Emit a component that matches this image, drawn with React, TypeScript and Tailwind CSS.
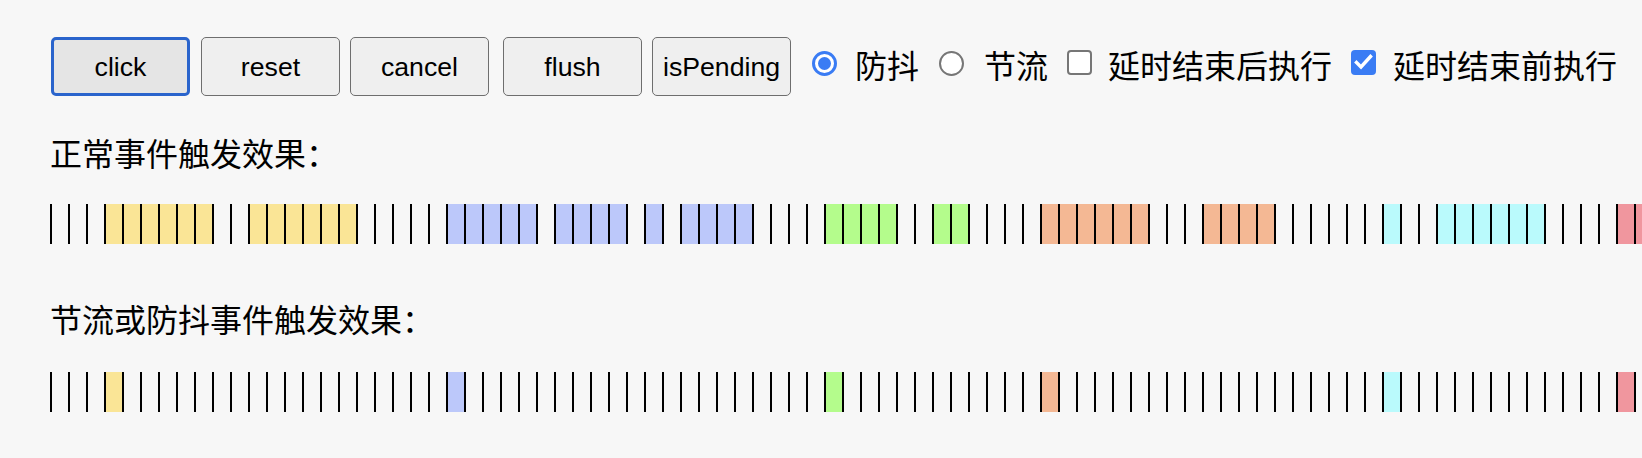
import React from "react";

const CJK = "font-['Noto_Sans_CJK_SC',sans-serif]";

// one letter per cell: . = idle, Y/B/G/O/C/P = burst colour
const NORMAL_ROW =
  "...YYYYYY..YYYYYY.....BBBBB.BBBB.B.BBBB....GGGG..GG....OOOOOO...OOOO......C..CCCCCC....PP.";
const LIMITED_HITS: Record<number, string> = { 3: "Y", 22: "B", 43: "G", 55: "O", 74: "C", 87: "P" };
const LIMITED_ROW = Array.from({ length: NORMAL_ROW.length }, (_, i) => LIMITED_HITS[i] ?? ".").join("");

const CELL_BG: Record<string, string> = {
  ".": "bg-transparent",
  Y: "bg-[#fae596]",
  B: "bg-[#bcc8fa]",
  G: "bg-[#b4fc8c]",
  O: "bg-[#f4b894]",
  C: "bg-[#bafafc]",
  P: "bg-[#f0969e]",
};

function Timeline({ cells }: { cells: string }) {
  return (
    <div className="flex h-[40px] pl-[50px]">
      {cells.split("").map((c, i) => (
        <div key={i} className={`h-full w-[18px] shrink-0 border-l-2 border-black ${CELL_BG[c]}`} />
      ))}
    </div>
  );
}

function ActionButton({ label, focused, className }: { label: string; focused?: boolean; className?: string }) {
  const look = focused
    ? "border-[3px] border-[#2a64cc] bg-[#e5e5e5]"
    : "border border-[#6e6e6e] bg-[#efefef]";
  return (
    <button
      className={`flex h-[59px] w-[139px] shrink-0 items-center justify-center rounded-[5px] font-['Liberation_Sans',Arial,sans-serif] text-[26.67px] text-black ${look} ${className ?? ""}`}
    >
      {label}
    </button>
  );
}

function Radio({ checked, className }: { checked?: boolean; className?: string }) {
  return checked ? (
    <span className={`flex h-[25px] w-[25px] shrink-0 items-center justify-center rounded-full border-[3px] border-[#3a7cf4] bg-white ${className ?? ""}`}>
      <span className="h-[13px] w-[13px] rounded-full bg-[#3a7cf4]" />
    </span>
  ) : (
    <span className={`h-[25px] w-[25px] shrink-0 rounded-full border-2 border-[#767676] bg-white ${className ?? ""}`} />
  );
}

function Checkbox({ checked, className }: { checked?: boolean; className?: string }) {
  return checked ? (
    <span className={`flex h-[25px] w-[25px] shrink-0 items-center justify-center rounded-[4px] bg-[#3a7cf4] ${className ?? ""}`}>
      <svg width="25" height="25" viewBox="0 0 25 25">
        <polyline points="5.5,12.5 10,17 19.5,6.5" fill="none" stroke="white" strokeWidth="3.4" strokeLinecap="square" />
      </svg>
    </span>
  ) : (
    <span className={`h-[25px] w-[25px] shrink-0 rounded-[4px] border-2 border-[#767676] bg-white ${className ?? ""}`} />
  );
}

function Label({ text, className }: { text: string; className?: string }) {
  return <span className={`shrink-0 whitespace-nowrap text-[32px] leading-[32px] text-black ${CJK} ${className ?? ""}`}>{text}</span>;
}

export default function App() {
  return (
    <div className="h-[458px] w-full overflow-hidden bg-[#f7f7f7] pt-[37px]">
      {/* ── Controls ─────────────────────────────────────────────── */}
      <div className="flex items-start pl-[51px]">
        <ActionButton label="click" focused />
        <ActionButton label="reset" className="ml-[11px]" />
        <ActionButton label="cancel" className="ml-[10px]" />
        <ActionButton label="flush" className="ml-[14px]" />
        <ActionButton label="isPending" className="ml-[10px]" />

        <Radio checked className="ml-[21px] mt-[14px]" />
        <Label text="防抖" className="ml-[18px] mt-[11px]" />
        <Radio className="ml-[20px] mt-[14px]" />
        <Label text="节流" className="ml-[20px] mt-[11px]" />
        <Checkbox className="ml-[19px] mt-[13px]" />
        <Label text="延时结束后执行" className="ml-[16px] mt-[11px]" />
        <Checkbox checked className="ml-[19px] mt-[13px]" />
        <Label text="延时结束前执行" className="ml-[17px] mt-[11px]" />
      </div>

      {/* ── Normal events ────────────────────────────────────────── */}
      <div className={`mt-[40px] h-[32px] pl-[50px] text-[32px] leading-[32px] text-black ${CJK}`}>正常事件触发效果：</div>
      <div className="mt-[36px]">
        <Timeline cells={NORMAL_ROW} />
      </div>

      {/* ── Throttled / debounced events ─────────────────────────── */}
      <div className={`mt-[58px] h-[32px] pl-[50px] text-[32px] leading-[32px] text-black ${CJK}`}>节流或防抖事件触发效果：</div>
      <div className="mt-[38px]">
        <Timeline cells={LIMITED_ROW} />
      </div>
    </div>
  );
}
